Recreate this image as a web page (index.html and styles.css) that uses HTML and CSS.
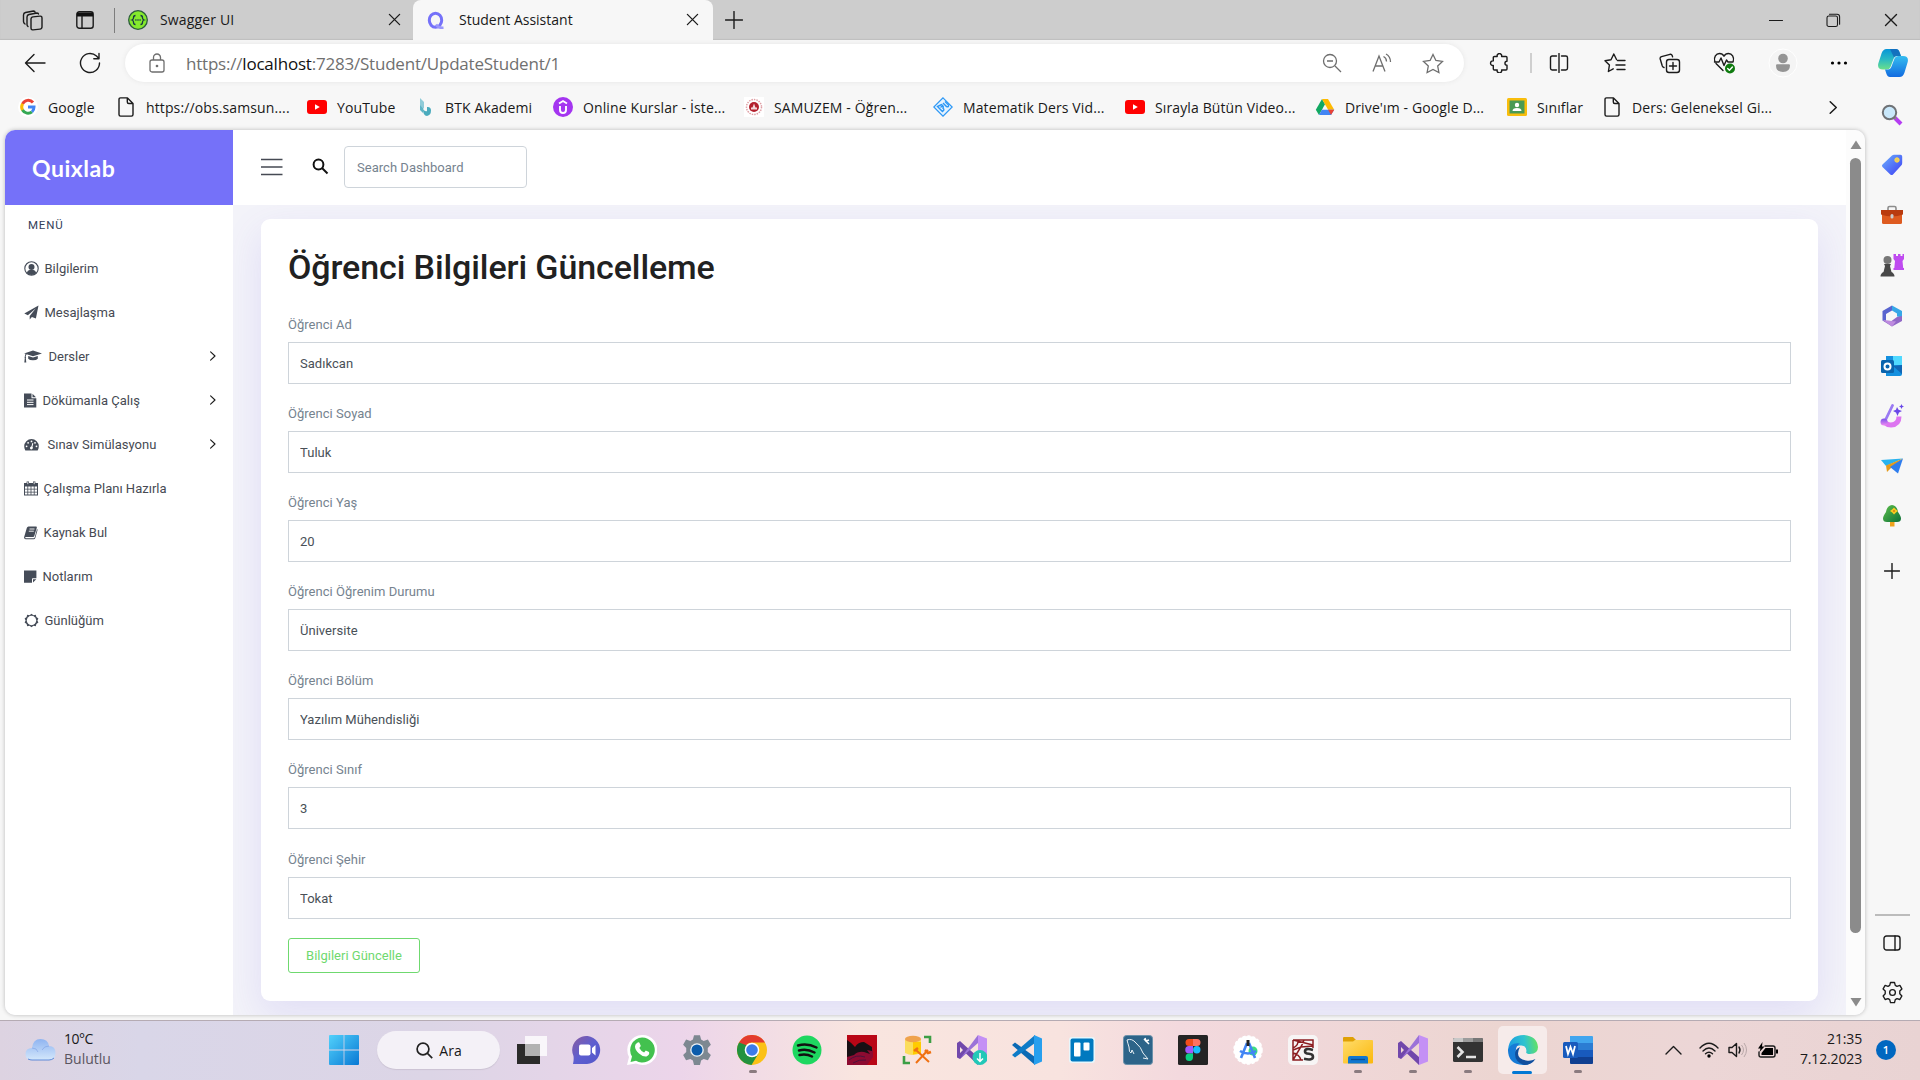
FILE: index.html
```html
<!DOCTYPE html>
<html lang="tr">
<head>
<meta charset="utf-8">
<title>Student Assistant</title>
<link rel="stylesheet" href="styles.css">
</head>
<body>
<svg class="defs" width="0" height="0" aria-hidden="true">
  <defs>
    <symbol id="close" viewBox="0 0 14 14"><path d="M1.5 1.5l11 11M12.5 1.5l-11 11" class="ln"/></symbol>
    <symbol id="file" viewBox="0 0 20 20"><path d="M4.5.9h7L17 6.4v11.2q0 1.5-1.5 1.5h-11Q3 19.100 3 17.600V2.400Q3 .900 4.500.900zM11.300 1v4q0 1.500 1.500 1.500H17" class="ln"/></symbol>
    <symbol id="youtube" viewBox="0 0 20 20"><rect x="0" y="3" width="20" height="14" rx="3" fill="#f00"/><path d="M8 7.300v5.400l4.800-2.700z" fill="#fff"/></symbol>
    <symbol id="chev" viewBox="0 0 10 14"><path d="M2 1.800L7.500 7 2 12.200" class="ln"/></symbol>
    <linearGradient id="gBlue" x1="0" y1="0" x2="1" y2="1"><stop offset="0" stop-color="#52d1fb"/><stop offset="1" stop-color="#0878d4"/></linearGradient>
    <linearGradient id="gCopA" x1="0" y1="0" x2="0" y2="1"><stop offset="0" stop-color="#0795d8"/><stop offset=".5" stop-color="#29b9c4"/><stop offset="1" stop-color="#6be08a"/></linearGradient>
    <linearGradient id="gCopB" x1="0" y1="0" x2="0" y2="1"><stop offset="0" stop-color="#35bdf0"/><stop offset="1" stop-color="#126be0"/></linearGradient>
    <linearGradient id="gViolet" x1="0" y1="0" x2="1" y2="1"><stop offset="0" stop-color="#8a5b9f"/><stop offset=".5" stop-color="#5d5fd0"/><stop offset="1" stop-color="#5357c9"/></linearGradient>
    <linearGradient id="gCloud" x1="0" y1="0" x2="0" y2="1"><stop offset="0" stop-color="#8fb4f1"/><stop offset="1" stop-color="#d3e7fb"/></linearGradient>
    <linearGradient id="gEdge" x1="0" y1=".4" x2="1" y2=".3"><stop offset="0" stop-color="#1b9de2"/><stop offset=".55" stop-color="#2fc3cf"/><stop offset="1" stop-color="#66e35d"/></linearGradient>
    <linearGradient id="gTag" x1="0" y1="0" x2="1" y2="1"><stop offset="0" stop-color="#6cb2fb"/><stop offset="1" stop-color="#3d3cf5"/></linearGradient>
    <linearGradient id="gMag" x1="0" y1="0" x2="0" y2="1"><stop offset="0" stop-color="#7a52ea"/><stop offset="1" stop-color="#f08bf3"/></linearGradient>
    <linearGradient id="gTree" x1="0" y1="0" x2="1" y2="1"><stop offset="0" stop-color="#5ec04a"/><stop offset="1" stop-color="#0d7038"/></linearGradient>
    <linearGradient id="gFolder" x1="0" y1="0" x2="1" y2="1"><stop offset="0" stop-color="#ffdc6b"/><stop offset="1" stop-color="#fbb80c"/></linearGradient>
    <symbol id="vs" viewBox="0 0 30 30"><path d="M0 8l3-2 6 5.500L21 22v8L9 18.500 3 24l-3-1.500zm3 4v6l3-3z" fill="#7148ab" fill-rule="evenodd"/><path d="M3 24L21 0v8L9 18.500z" fill="#9b72d8"/><path d="M21 0l9 3.500v23L21 30z" fill="#c490f5"/></symbol>
    <symbol id="gear" viewBox="0 0 24 24"><path d="M9.900 1.600h4.200l.8 3 1.800 1 3-1 2.100 3.700-2.200 2.200v2.900l2.200 2.200-2.100 3.700-3-.9-1.800 1-.8 3.100H9.900l-.8-3.100-1.800-1-3 .9-2.100-3.700 2.200-2.200v-2.900L2.200 8.300l2.100-3.700 3 1 1.800-1z"/><circle cx="12" cy="12" r="3"/></symbol>
  </defs>
</svg>
<div class="screen">
  <header class="tabs">
    <span class="slot workspaces"><svg width="22" height="22" viewBox="0 0 22 22" class="ln"><rect x="9" y="7" width="11" height="13" rx="2" transform="skewY(-6) translate(0 2)"/><path d="M6 17.500q-1-.8-1-2V8q0-2 2-2.500l8-1.500q1.500 0 1.500 1M3 15q-1.500-1-1.500-2.500V6q0-2 2-2.500l8-1.500q1.500 0 1.500 1"/></svg></span>
    <span class="slot vtabs"><svg width="18" height="18" viewBox="0 0 18 18"><rect x=".8" y=".8" width="16.400" height="16.400" rx="2.500" class="ln"/><path d="M1 1.500h16V5.500H1z" fill="#111"/><path d="M6 5v12" class="ln"/></svg></span>
    <i class="tabsep"></i>
    <div class="tab">
      <svg width="20" height="20" viewBox="0 0 20 20"><circle cx="10" cy="10" r="9.300" fill="#85ea2d" stroke="#2b5c3b" stroke-width="1.300"/><path d="M7.500 5.500q-2 0-2 2.200 0 1.800-1.500 2.300 1.500.5 1.500 2.300 0 2.200 2 2.200M12.500 5.500q2 0 2 2.200 0 1.800 1.500 2.300-1.500.5-1.500 2.300 0 2.200-2 2.200" fill="none" stroke="#173647" stroke-width="1.300"/><path d="M7.300 10h1.200M9.400 10h1.200M11.500 10h1.200" stroke="#173647" stroke-width="1.400"/></svg>
      <span class="tabname">Swagger UI</span><svg class="x" width="13" height="13"><use href="#close"/></svg>
    </div>
    <div class="tab active">
      <svg width="20" height="20" viewBox="0 0 20 20"><ellipse cx="9.500" cy="10.200" rx="6.200" ry="7" fill="none" stroke="#7571f9" stroke-width="3"/><path d="M10 14.500q2 3.500 7.500 3.200" fill="none" stroke="#9a97fb" stroke-width="2.600"/></svg>
      <span class="tabname">Student Assistant</span><svg class="x" width="13" height="13"><use href="#close"/></svg>
    </div>
    <span class="newtab"><svg width="18" height="18" viewBox="0 0 18 18"><path d="M9 .5v17M.5 9h17" class="ln"/></svg></span>
    <div class="winbtns">
      <svg width="14" height="14" viewBox="0 0 14 14"><path d="M0 7.500h13.500" class="ln thin"/></svg>
      <svg width="15" height="15" viewBox="0 0 15 15" class="ln thin"><rect x="1" y="3" width="10.500" height="10.500" rx="1.800"/><path d="M3.500 1.200h7.500q2.600 0 2.600 2.600v7.500"/></svg>
      <svg width="14" height="14"><use href="#close"/></svg>
    </div>
  </header>

  <nav class="toolbar">
    <span class="slot back"><svg width="22" height="20" viewBox="0 0 22 20"><path d="M10 1.500L1.500 10l8.500 8.500M1.500 10H21" class="ln"/></svg></span>
    <span class="slot"><svg width="22" height="22" viewBox="0 0 22 22"><path d="M20.500 11a9.500 9.500 0 1 1-3-6.900l2.300 2.400M20 1.500v5.200h-5.200" class="ln"/></svg></span>
    <div class="address">
      <svg class="lock" width="18" height="20" viewBox="0 0 18 20"><rect x="2" y="7" width="14" height="12" rx="2"/><path d="M5.500 7V4.500a3.500 3.500 0 0 1 7 0V7"/><circle cx="9" cy="13" r=".7"/></svg>
      <span class="url">https://<b>localhost</b>:7283/Student/UpdateStudent/1</span>
      <div class="addricons">
        <svg width="20" height="20" viewBox="0 0 20 20"><circle cx="8" cy="8" r="6.500"/><path d="M13 13l6 6M5 8h6"/></svg>
        <svg width="20" height="20" viewBox="0 0 20 20"><path d="M1 18.500L7 3l6 15.500M3 13h8M11.500 3.500q3 1.500 3 5M14 1q4.500 2.500 4.500 8"/></svg>
        <svg width="22" height="21" viewBox="0 0 22 21"><path d="M11 1.500l2.900 6 6.600.9-4.800 4.600 1.200 6.500L11 16.400l-5.900 3.100 1.200-6.500L1.500 8.400l6.600-.9z"/></svg>
      </div>
    </div>
    <div class="tools">
      <svg width="20" height="20" viewBox="0 0 20 20" class="ln"><path d="M5.500 3.500h2.700a2.300 2.300 0 1 1 4.400 0H17q1 0 1 1v3.700a1.900 1.900 0 1 0 0 4.100v3.700q0 1-1 1h-4.400a2.300 2.300 0 1 1-4.400 0H5.500q-1.200 0-1.200-1v-3.600a2.300 2.300 0 1 1 0-4.500V4.500q0-1 1.200-1z"/></svg>
      <i class="toolsep"></i>
      <svg width="20" height="20" viewBox="0 0 20 20" class="ln"><path d="M7.500 3H3.200Q1.500 3 1.500 4.700v10.600q0 1.700 1.700 1.700h4.300M12.500 3h4.300q1.700 0 1.700 1.700v10.600q0 1.700-1.700 1.700h-4.300M10 .5v19"/></svg>
      <svg width="22" height="20" viewBox="0 0 22 20" class="ln"><path d="M12.500 6.500L9.800 1 7 6.800 1 7.700l4.400 4.400-1 6.400 4.800-2.700M13.500 7.500H21M12 12h9M13 16.500h8"/></svg>
      <svg width="22" height="21" viewBox="0 0 22 21" class="ln"><rect x="7.500" y="6.500" width="13" height="13" rx="2.500"/><path d="M14 9.500v7M10.500 13h7M5 14.500q-1.200-.3-1.700-1.500L1.200 6Q.8 4.200 2.500 3.700L11 1.300q1.600-.3 2.200 1.300l.4 1.300"/></svg>
      <svg width="24" height="22" viewBox="0 0 24 22" class="ln"><path d="M10 18.500L3 11.500M1.800 9.500C.5 5 3 1.500 6.500 1.500q3 0 4.500 2.700 1.500-2.700 4.500-2.700c3.500 0 6 3.500 4.700 8M1.500 10h4.500l2-4 3 7.500L13.500 8l1.500 2h5"/><circle cx="17" cy="16.500" r="5" fill="#0f7b0f" stroke="none"/><path d="M14.700 16.600l1.700 1.700 3-3.300" stroke="#fff"/></svg>
      <svg width="30" height="30" viewBox="0 0 30 30"><circle cx="15" cy="15" r="14" fill="#f4f4f4" stroke="#fff"/><circle cx="15" cy="10.500" r="4.800" fill="#949494"/><path d="M8 17.500q0-1.200 1.200-1.200h11.600q1.200 0 1.200 1.200 0 6.500-7 6.500t-7-6.500z" fill="#949494"/></svg>
      <svg width="18" height="6" viewBox="0 0 18 6"><circle cx="2.500" cy="3" r="1.600"/><circle cx="9" cy="3" r="1.600"/><circle cx="15.500" cy="3" r="1.600"/></svg>
      <svg width="30" height="28" viewBox="0 0 30 28"><path d="M8.500 0H18q2.500 0 3.500 3L23 7h-4q-2.500 0-3.500 3l-3 8q-1 2.500-4 2.500H5q-6 0-4.700-6L3.500 4.500Q5 0 8.500 0z" fill="url(#gCopA)"/><path d="M21.500 28H12q-2.500 0-3.500-3L7 20.500h3q2.500 0 3.500-3l3-8Q17.500 7 20 7h5q6 0 4.700 6l-3.200 10.500Q25 28 21.500 28z" fill="url(#gCopB)"/><path d="M12 0h6q2.500 0 3.500 3L23 7h-4.500q-2 0-2.500 1.500z" fill="#1462b8" opacity=".75"/></svg>
    </div>
  </nav>

  <nav class="bookmarks">
    <a class="w97"><svg width="20" height="20" viewBox="0 0 20 20"><circle cx="10" cy="10" r="10" fill="#fff"/><g fill="none" stroke-width="3"><path d="M15 5.500A6.300 6.300 0 0 0 4.500 7" stroke="#ea4335"/><path d="M4.600 6.800a6.300 6.300 0 0 0 0 6.400" stroke="#fbbc05"/><path d="M4.500 13A6.300 6.300 0 0 0 14 14.800" stroke="#34a853"/><path d="M10 10h6q0 3.200-2 4.800" stroke="#4285f4"/></g></svg><span>Google</span></a>
    <a class="w191"><svg width="20" height="20"><use href="#file"/></svg><span>https://obs.samsun....</span></a>
    <a class="w108"><svg width="20" height="20"><use href="#youtube"/></svg><span>YouTube</span></a>
    <a class="w138"><svg width="20" height="20" viewBox="0 0 20 20"><path d="M5 1l4 4v7L5 8.500z" fill="#8fcbd8"/><path d="M5 8l3 3v5l-3-3z" fill="#5eb4c6"/><path d="M8 12q0 7 4 7 4-1 4-5.500 0-4-4-3.500v4q-2 1-4-2z" fill="#4aabbd"/></svg><span>BTK Akademi</span></a>
    <a class="w191"><svg width="20" height="20" viewBox="0 0 20 20"><circle cx="10" cy="10" r="10" fill="#a435f0"/><path d="M6 6.500L10 4l4 2.500M7 9v4q0 3 3 3t3-3V9" fill="none" stroke="#fff" stroke-width="1.900"/></svg><span>Online Kurslar - İste...</span></a>
    <a class="w189"><svg width="20" height="20" viewBox="0 0 20 20"><path fill="#fff" d="M0 0h20v20H0z"/><circle cx="10" cy="10" r="7.500" fill="none" stroke="#df9fa4" stroke-width="1.500" stroke-dasharray="1.500 1"/><circle cx="10" cy="10" r="5" fill="#b3202d"/><path d="M10 6.500l1.500 4h1.500v2H7v-2h1.500z" fill="#f3d8da"/></svg><span>SAMUZEM - Öğren...</span></a>
    <a class="w192"><svg width="20" height="20" viewBox="0 0 20 20"><path d="M10 .8l9.200 9.200-9.200 9.200L.8 10z" fill="#e6f3fe" stroke="#2c97f5" stroke-width="1.200"/><path d="M4.500 9.500l5 5q2.500-1.500.5-3.200 1-2.500-1.500-3.800zM7.500 10.500l2-1.800M10 6l3.500 3.600q2.500.8 2-1.600L12 4.500" fill="none" stroke="#2c97f5" stroke-width="1.400"/></svg><span>Matematik Ders Vid...</span></a>
    <a class="w190"><svg width="20" height="20"><use href="#youtube"/></svg><span>Sırayla Bütün Video...</span></a>
    <a class="w192"><svg width="20" height="20" viewBox="0 0 20 20"><path d="M7 2L10 7.300 4 18 .8 12.700z" fill="#11a861"/><path d="M7 2h6l6.200 10.700h-6.100z" fill="#ffba00"/><path d="M6.900 12.700h12.300L16 18H4z" fill="#4285f4"/><path d="M13.100 12.700h6.100L16 18z" fill="#ea4335"/></svg><span>Drive'ım - Google D...</span></a>
    <a class="w95"><svg width="20" height="20" viewBox="0 0 20 20"><rect y="1" width="20" height="18" rx="1.500" fill="#f9bd0c"/><path d="M2.500 3.500h15v13h-15z" fill="#4a9a54"/><circle cx="10" cy="8" r="2.200" fill="#fff"/><path d="M5.500 14q0-3 4.500-3t4.500 3z" fill="#fff"/></svg><span>Sınıflar</span></a>
    <a class="w226"><svg width="20" height="20"><use href="#file"/></svg><span>Ders: Geleneksel Gi...</span></a>
    <svg class="more" width="11" height="17"><use href="#chev"/></svg>
  </nav>

  <div class="middle">
    <div class="page">
      <aside class="side">
        <div class="brand">Quixlab</div>
        <div class="menulabel">MENÜ</div>
        <ul class="menu">
          <li><svg width="15" height="15" viewBox="0 0 15 15"><circle cx="7.500" cy="7.500" r="6.700" fill="none" stroke="#454c58" stroke-width="1.100"/><circle cx="7.500" cy="6" r="3"/><path d="M2.800 11.500q1-2.300 2.700-2.600h4q1.700.3 2.700 2.600-1.700 2.500-4.700 2.500t-4.700-2.500z"/></svg><span class="p6">Bilgilerim</span></li>
          <li><svg width="15" height="15" viewBox="0 0 15 15"><path d="M14.500.5L.3 8.600l3.600 1.600 8-7-6.200 7.900v3.400l2.200-2.600 4 1.700z"/></svg><span class="p6">Mesajlaşma</span></li>
          <li><svg width="18" height="15" viewBox="0 0 18 15"><path d="M9 1.500l9 2.900-9 2.900-6.300-2.100q-.9.700-1 2.600.8.500.1 1.200l.5 4.400H.3l.5-4.400q-.6-.7 0-1.200 0-1.700.8-3L0 4.400zM4.200 7L9 8.500 13.800 7v2.800Q12.500 11.300 9 11.300t-4.800-1.500z"/></svg><span class="p7">Dersler</span><svg class="arrow" width="8" height="12"><use href="#chev"/></svg></li>
          <li><svg width="13" height="15" viewBox="0 0 13 15"><path d="M0 .5h7.500v4.800h4.800v9.200H0zM8.500.8l3.500 3.500H8.500z"/><path d="M3 7h6.500M3 9.300h6.500M3 11.600h6.500" stroke="#fff"/></svg><span class="p6">Dökümanla Çalış</span><svg class="arrow" width="8" height="12"><use href="#chev"/></svg></li>
          <li><svg width="15" height="15" viewBox="0 0 15 15"><path d="M7.500 2A7.300 7.300 0 0 0 .2 9.300q0 2 1 3.900.1.300.6.300h11.400q.5 0 .6-.3 1-1.900 1-3.900A7.300 7.300 0 0 0 7.500 2z"/><g fill="#fff"><circle cx="2.600" cy="9.300" r=".9"/><circle cx="4.100" cy="5.800" r=".9"/><circle cx="7.500" cy="4.400" r=".9"/><circle cx="11" cy="5.800" r=".9"/><circle cx="12.500" cy="9.300" r=".9"/><path d="M8.300 6l1 .3-.8 3.400q1 1-.1 2.200-1.300 1-2.300-.1-.7-1.800 1.400-2.500z"/></g></svg><span class="p9">Sınav Simülasyonu</span><svg class="arrow" width="8" height="12"><use href="#chev"/></svg></li>
          <li><svg width="14" height="15" viewBox="0 0 14 15"><path d="M0 2h14v12.500H0z"/><path d="M1 5.500h2.400v2.200H1zm3.200 0h2.400v2.200H4.200zm3.200 0h2.400v2.200H7.400zm3.200 0H13v2.200h-2.400zM1 8.500h2.400v2.200H1zm3.200 0h2.400v2.200H4.200zm3.200 0h2.400v2.200H7.400zm3.200 0H13v2.200h-2.400zM1 11.500h2.400v2H1zm3.200 0h2.400v2H4.200zm3.200 0h2.400v2H7.400zm3.200 0H13v2h-2.400z" fill="#fff"/><path d="M3.800.5v3M10.200.5v3" stroke="#454c58" stroke-width="2.400"/><path d="M3.800 1v2.200M10.200 1v2.200" stroke="#fff" stroke-width=".8"/></svg><span class="p6">Çalışma Planı Hazırla</span></li>
          <li><svg width="14" height="15" viewBox="0 0 14 15"><path d="M4.500 1.500h7.800q.8.200.5 1.200L10.300 11q-.3.900-1.200.9H2q-1 .2-.8.900.2.500 1 .5h7.600q.6 0 .9-.8L13 4q.8.400.5 1.300L11.300 13q-.4 1.300-1.600 1.300H2q-1.600 0-2-1.900L2.800 3q.4-1.500 1.700-1.500z"/><path d="M5.500 4h5M4.800 6.200h5" stroke="#fff" stroke-width=".9"/></svg><span class="p6">Kaynak Bul</span></li>
          <li><svg width="13" height="15" viewBox="0 0 13 15"><path d="M0 1.500h12.400v7.800H8.700q-.7 0-.7.700v3.800H0zM9 10.300h3.300L9 13.600z"/></svg><span class="p6">Notlarım</span></li>
          <li><svg width="15" height="15" viewBox="0 0 15 15"><path d="M7.500.7l1.900 1.500 2.400-.4.600 2.300 2 1.300-1 2.100 1 2.100-2 1.300-.6 2.300-2.400-.4-1.900 1.500-1.900-1.500-2.400.4-.6-2.300-2-1.300 1-2.100-1-2.100 2-1.300.6-2.300 2.400.4z"/><circle cx="7.500" cy="7.500" r="4.700" fill="#fff"/></svg><span class="p6">Günlüğüm</span></li>
        </ul>
      </aside>
      <div class="main">
        <div class="apphead">
          <svg class="burger" width="22" height="18" viewBox="0 0 22 18"><path d="M0 1.500h21.500M0 9h21.500M0 16.500h21.500"/></svg>
          <svg class="find" width="17" height="17" viewBox="0 0 17 17"><circle cx="6.500" cy="6.500" r="4.900"/><path d="M10 10l5.500 5.500"/></svg>
          <input class="search" placeholder="Search Dashboard">
        </div>
        <div class="content">
          <form class="card">
            <h1>Öğrenci Bilgileri Güncelleme</h1>
            <label>Öğrenci Ad</label><input value="Sadıkcan">
            <label>Öğrenci Soyad</label><input value="Tuluk">
            <label>Öğrenci Yaş</label><input value="20">
            <label>Öğrenci Öğrenim Durumu</label><input value="Üniversite">
            <label>Öğrenci Bölüm</label><input value="Yazılım Mühendisliği">
            <label>Öğrenci Sınıf</label><input value="3">
            <label>Öğrenci Şehir</label><input value="Tokat">
            <button type="button">Bilgileri Güncelle</button>
          </form>
        </div>
      </div>
      <div class="scroll">
        <svg width="12" height="10" viewBox="0 0 12 10"><path d="M6 .5L11.500 9H.5z"/></svg>
        <i class="thumb"></i>
        <svg width="12" height="10" viewBox="0 0 12 10"><path d="M6 9.500L11.500 1H.5z"/></svg>
      </div>
    </div>
    <aside class="dock">
      <span><svg width="22" height="22" viewBox="0 0 22 22"><path d="M13.500 13.500l6.500 6.500" stroke="#b53df2" stroke-width="4"/><path d="M12.500 12.500l2.500 2.500" stroke="#888" stroke-width="2"/><circle cx="8.500" cy="8.500" r="6.700" fill="#c9e8fb" stroke="#6f7276" stroke-width="2"/></svg></span>
      <span><svg width="22" height="22" viewBox="0 0 22 22"><path d="M11 1.500q1-.7 2-.7h6.500q1.700 0 1.700 1.700v6.500q0 1.500-1 2.500L12 20.500q-1.300 1.200-2.700 0L1.500 13q-1.200-1.200 0-2.500z" fill="url(#gTag)"/><circle cx="16" cy="6" r="2.200" fill="#e7cc62" stroke="#ffd94a"/></svg></span>
      <span><svg width="24" height="20" viewBox="0 0 24 20"><path d="M8 5V3q0-1.500 1.500-1.500h5Q16 1.500 16 3v2" fill="none" stroke="#8c8c8c" stroke-width="1.600"/><rect x="2" y="6" width="20" height="13" rx="1.500" fill="#de5b20"/><path d="M1 5h22v4.500q-11 4-22 0z" fill="#b93b0f"/><rect x="10.500" y="9" width="3" height="4.500" rx="1.500" fill="#ccc"/></svg></span>
      <span><svg width="24" height="24" viewBox="0 0 24 24"><path d="M13.500 1h2.500v2h2V1h2.500v2h2V1H24v5l-1.500 2 .7 7H24v2H13.500v-2h.8l.7-7-1.500-2z" fill="#bf4bf0"/><circle cx="7.500" cy="7" r="4" fill="#777"/><path d="M4 11h7l-1 2 1.500 6q3 1.500 3 4.500H.5q0-3 3-4.500L5 13z" fill="#484848"/></svg></span>
      <span><svg width="22" height="22" viewBox="0 0 22 22"><path d="M11 .5L1.500 6v9.500L5 17V9l6-3.500z" fill="#5864cf"/><path d="M11 .5L21 6v6.500l-5-1V8.500L11 5.500z" fill="#36a7e7"/><path d="M21 11v5l-10 5.500-9.500-6 9 .5L16 12z" fill="#9168c7"/><path d="M2 15l9 6.500 4-5-5-.5z" fill="#be8bdf"/></svg></span>
      <span><svg width="22" height="22" viewBox="0 0 22 22"><path d="M5 1h15q1 0 1 1v17q0 2-2 2H5z" fill="#1490df"/><path d="M12 1h9v9h-9z" fill="#50d9ff"/><path d="M12 11l9 8v-9z" fill="#1066b5"/><rect x="0" y="5" width="13" height="13" rx="1.500" fill="#0a64ad"/><circle cx="6.500" cy="11.500" r="3" fill="none" stroke="#fff" stroke-width="2"/></svg></span>
      <span><svg width="24" height="24" viewBox="0 0 24 24"><path d="M4 15q.5 6 7 6 8-.5 8-8.500" fill="none" stroke="#dd75f0" stroke-width="5"/><path d="M5 17L12.500 1.500" stroke="#9a7af3" stroke-width="2.800" stroke-linecap="round"/><circle cx="4" cy="18" r="3.500" fill="url(#gMag)"/><path d="M17 3l1.500 2.700L22 7l-3 1.500L17.500 12 16 8.500 13 7l3-1.200zM21.500 0l.8 1.700L24 2.500l-1.700.8-.8 1.700-.8-1.700-1.700-.8 1.700-.8z" fill="#6a48e8"/></svg></span>
      <span><svg width="22" height="18" viewBox="0 0 22 18"><path d="M0 3L22 1.500 5 9z" fill="#29b3ef"/><path d="M22 1.500L5 8.500l1 6.500 4-4z" fill="#e59b1c"/><path d="M22 1.500L9 10l8 6.500z" fill="#2e7dee"/></svg></span>
      <span><svg width="20" height="24" viewBox="0 0 20 24"><path d="M8 16h4.500v6.500H8z" fill="#efa21d"/><path d="M10 1q5 .5 6 7 3 4 3 6.500 0 3.500-4 3.500H5q-4 0-4-3.500Q1 12 4 8q1-6.500 6-7z" fill="url(#gTree)"/><path d="M12 3.500l1.700 1.800L16 7l-2 1.500-2 1.900-1.800-1.900L8 7l2.300-1.700z" fill="#f9cb21"/><circle cx="12" cy="7" r="1" fill="#d77c10"/></svg></span>
      <span class="plus"><svg width="16" height="16" viewBox="0 0 16 16"><path d="M8 .5v15M.5 8h15" class="ln"/></svg></span>
      <i class="rule"></i>
      <span class="panel"><svg width="18" height="16" viewBox="0 0 18 16" class="ln"><rect x="1" y="1" width="16" height="14" rx="2.500"/><path d="M12 1v14"/></svg></span>
      <span class="cog"><svg width="23" height="23" class="ln"><use href="#gear"/></svg></span>
    </aside>
  </div>

  <footer class="taskbar">
    <div class="weather">
      <svg width="31" height="24" viewBox="0 0 31 24"><path d="M7 23q-6.500 0-6.500-6T7 11q1-9 8.500-9t8.500 7q6.500 0 6.500 7T24 23z" fill="url(#gCloud)"/><path d="M7 11q5 0 6 4M24 9q-5 0-7 4" fill="none" stroke="#7d9fe5" opacity=".6"/><path d="M3 22q2 1 4 1h17q3 0 5-2" fill="none" stroke="#5e8ad8"/></svg>
      <div><div class="deg">10°C</div><div class="cond">Bulutlu</div></div>
    </div>
    <div class="apps">
      <span class="start"><svg width="30" height="30" viewBox="0 0 30 30"><path d="M1 0h13.600v14.500H0V1q0-1 1-1zM15.400 0H29q1 0 1 1v13.500H15.400zM0 15.500h14.600V30H1q-1 0-1-1zM15.400 15.500H30V29q0 1-1 1H15.400z" fill="url(#gBlue)"/></svg></span>
      <div class="ara"><svg width="17" height="17" viewBox="0 0 17 17"><circle cx="7" cy="7" r="5.900"/><path d="M11.200 11.200l5 5"/></svg><span>Ara</span></div>
      <div class="icons">
        <span><svg width="30" height="30" viewBox="0 0 30 30"><path d="M0 9h23v20H0z" fill="#2b2b2a"/><path d="M8 1h22v20H8z" fill="#fff" opacity=".78"/><path d="M8 9h15v12H8z" fill="#9f9f9f" opacity=".6"/></svg></span>
        <span><svg width="30" height="30" viewBox="0 0 30 30"><path d="M1 29q1-4 .5-8A14 14 0 1 1 15 29z" fill="url(#gViolet)"/><rect x="7" y="9.500" width="11.500" height="11" rx="2" fill="#fff"/><path d="M20 13l3.500-3v10.500L20 17.500z" fill="#fff"/></svg></span>
        <span><svg width="30" height="30" viewBox="0 0 30 30"><path d="M15 0a15 15 0 1 1-6 28.500L0 30l2-8A15 15 0 0 1 15 0z" fill="#fff"/><path d="M15 2.500a12.500 12.500 0 1 1-6 23.300L3.500 27 5 21.500A12.500 12.500 0 0 1 15 2.500z" fill="#43c14f"/><path d="M10 8q2-1.500 2.800.5l1 2.500-1.500 2q1.700 3.200 4.800 4.500l1.700-2 3.200 1.600q1 3-2.500 4.300-3.500.6-7.500-3t-4-7q0-2.200 2-3.400z" fill="#fff"/></svg></span>
        <span><svg width="34" height="34" viewBox="0 0 24 24" fill="#7d8891"><use href="#gear"/><circle cx="12" cy="12" r="4.800" fill="#eef3f7"/><circle cx="12" cy="12" r="3.900" fill="#0b5cab"/></svg></span>
        <span class="on"><svg width="30" height="30" viewBox="0 0 30 30"><circle cx="15" cy="15" r="15" fill="#fbc116"/><path d="M2 7.500A15 15 0 0 0 14.500 30l7-11.500L15 15z" fill="#23923f"/><path d="M2 7.500A15 15 0 0 1 28 7.500H15q-5 0-6.500 4z" fill="#e33b2e"/><path d="M2 7.500l6.500 11.200 3-7.700z" fill="#23923f"/><circle cx="15" cy="15" r="7.300" fill="#fff"/><circle cx="15" cy="15" r="5.800" fill="#3c7be8"/></svg></span>
        <span><svg width="30" height="30" viewBox="0 0 30 30"><circle cx="15" cy="15" r="14.500" fill="#1ed760"/><path d="M6 10.500q9.500-2.500 18.500 2M7 15.500q8-2 15.500 2M7.500 20q7-1.500 12.500 1.500" fill="none" stroke="#111" stroke-width="2.500" stroke-linecap="round"/></svg></span>
        <span><svg width="30" height="30" viewBox="0 0 30 30"><path d="M0 0h30v30H0z" fill="#b90616"/><path d="M0 20l12-8 14 3v7l-6 8H0z" fill="#8d0b31"/><path d="M0 5q5 3 8 7 3-5 9-5l8 5v4l-5-1 3 4-6-2q-6-1-10 3l-7 2z" fill="#171014"/><path d="M2 25q7-6 16-3M6 28q6-4 13-3" fill="none" stroke="#4c123b"/></svg></span>
        <span><svg width="30" height="30" viewBox="0 0 30 30"><path d="M3 4v14q7 4 16 0V4z" fill="#fbdd5c"/><path d="M11 7h8v11l-8 1.500z" fill="#ffcb00"/><ellipse cx="11" cy="4" rx="8" ry="3.200" fill="#efa24c"/><path d="M22 2h6v6M2 21v7h6" fill="none" stroke="#3c9e44" stroke-width="2.600"/><path d="M14 15l13 12M26 15L14 28" stroke="#f07112" stroke-width="2"/><path d="M12 16l4-3M23 15l3 3 3-1" stroke="#f07112" stroke-width="2.600" fill="none"/></svg></span>
        <span><svg width="30" height="30" viewBox="0 0 30 30"><use href="#vs"/><circle cx="23" cy="22.500" r="7.500" fill="#22c8b7"/><path d="M23 18v8M20 23.500l3 3 3-3" fill="none" stroke="#fff" stroke-width="1.500"/></svg></span>
        <span><svg width="30" height="30" viewBox="0 0 30 30"><path d="M0 10l3-2.500L23 22v8L0 10z" fill="#0b6ab5"/><path d="M0 20L23 0v8L3 22.500z" fill="#0e7bc7"/><path d="M22 0l8 3.500v23L22 30z" fill="#279fee"/></svg></span>
        <span><svg width="26" height="26" viewBox="0 0 26 26"><rect width="26" height="26" rx="3" fill="#e7f7fc"/><rect x="1.500" y="1.500" width="23" height="23" rx="2" fill="#0079bf"/><rect x="5" y="5.500" width="6.500" height="14" rx="1" fill="#fff"/><rect x="14.500" y="5.500" width="6" height="8" rx="1" fill="#fff"/></svg></span>
        <span><svg width="30" height="30" viewBox="0 0 30 30"><rect x=".5" y=".5" width="29" height="29" rx="3" fill="#2d6489" stroke="#6a91aa"/><path d="M4 5q5-2 9 3 5 4 7 10l5 6-5-1M4 5q1 4 2 7 0 6 2 6l1-3 2 4" fill="none" stroke="#e8f0f5" stroke-width="1"/><path d="M21 4l5 5M22 3l1 3 3-1" stroke="#fff" stroke-width="1.500" fill="none"/></svg></span>
        <span><svg width="30" height="30" viewBox="0 0 30 30"><rect width="30" height="30" rx="1.500" fill="#242424"/><path d="M15 4h-4a3.500 3.500 0 0 0 0 7h4z" fill="#f24e1e"/><path d="M15 4h4a3.500 3.500 0 0 1 0 7h-4z" fill="#ff7262"/><path d="M15 11h-4a3.600 3.600 0 0 0 0 7.500h4z" fill="#a259ff"/><circle cx="18.800" cy="14.800" r="3.700" fill="#1abcfe"/><path d="M15 18.500h-4a3.700 3.700 0 1 0 4 3.700z" fill="#0acf83"/></svg></span>
        <span><svg width="30" height="30" viewBox="0 0 30 30"><circle cx="15" cy="15" r="14" fill="#fff" stroke="#fff" stroke-width="1.500" stroke-dasharray="3 2"/><circle cx="20" cy="16" r="4.500" fill="#3ddc84"/><path d="M14 8L8 23M16 8l6 15M7 16q8 5 16 0" fill="none" stroke="#4285f4" stroke-width="2.600"/><path d="M15 5v6" stroke="#222" stroke-width="3"/></svg></span>
        <span><svg width="30" height="30" viewBox="0 0 30 30"><rect width="30" height="30" rx="5" fill="#f7f5f5"/><path d="M5 5h20v8M5 5v20h10M5 5l20 5M5 25l9-15 2-5M5 15l8-3 12-1M5 18q6 1 8 7M10 5q1 5-5 8" fill="none" stroke="#8c1d20" stroke-width="1.500"/><path d="M25 15q-8-2.500-8 1.500 0 2 4 2.300 4 .4 4 3 0 4-9 2" fill="none" stroke="#333" stroke-width="2.600"/></svg></span>
        <span class="on"><svg width="30" height="28" viewBox="0 0 30 28"><path d="M0 2q0-1 1-1h9l3 3v4H0z" fill="#dfa005"/><path d="M0 5.500h10l2-1.500h17q1 0 1 1v21.500q0 1-1 1H1q-1 0-1-1z" fill="url(#gFolder)"/><path d="M5 27.500V22q0-2 2-2h16q2 0 2 2v5.500z" fill="#1177cf"/><path d="M8 23.500h14" stroke="#0b4f92" stroke-width="1.300"/></svg></span>
        <span class="on"><svg width="30" height="30"><use href="#vs"/></svg></span>
        <span class="on"><svg width="30" height="24" viewBox="0 0 30 24"><rect width="30" height="24" rx="1.500" fill="#333"/><path d="M0 1.500Q0 0 1.500 0H10v4H0z" fill="#c8c8c8"/><path d="M10 0h10v4H10z" fill="#9c9c9c"/><path d="M20 0h8.500Q30 0 30 1.500V4H20z" fill="#777"/><path d="M4.500 9l5 5-5 5M13 19h10" fill="none" stroke="#e3e3e3" stroke-width="2.600"/></svg></span>
        <span class="on current"><svg width="30" height="30" viewBox="0 0 30 30"><path d="M0 15Q1 0 16 0q13 1 14 12 0 7-8 7-5 0-3.500-3 0-5-5-5.500Q3 10 0 17z" fill="url(#gEdge)"/><path d="M0 15q3-8 12-6.500-5 3-4 9 2 9 13 9l5-1q-5 5-11 4.500Q0 29 0 15z" fill="#167bd6"/><path d="M12 12q-6 11 6 13.500 5 1 9.500-1.500-4 6-11.500 6-9-3-9-11 0-5 5-7z" fill="#104f9e"/></svg></span>
        <span class="on"><svg width="30" height="28" viewBox="0 0 30 28"><path d="M7 0h22q1 0 1 1v6H7z" fill="#41a5ee"/><path d="M7 7h23v7H7z" fill="#2b7cd3"/><path d="M7 14h23v7H7z" fill="#185abd"/><path d="M7 21h23v6q0 1-1 1H8q-1 0-1-1z" fill="#103f91"/><rect y="6" width="15" height="16" rx="1.500" fill="#185abd"/><path d="M3 10l2 8 2.500-7 2.500 7 2-8" fill="none" stroke="#fff" stroke-width="1.800"/></svg></span>
      </div>
    </div>
    <div class="tray">
      <svg width="17" height="10" viewBox="0 0 17 10"><path d="M1 9l7.500-7.500L16 9" class="ln"/></svg>
      <svg class="wifi" width="20" height="16" viewBox="0 0 20 16"><path d="M1 6Q10-3.500 19 6M4 9q6-6 12 0M6.500 11.800Q10 8.500 13.500 11.800" class="ln"/><circle cx="10" cy="14" r="1.700"/></svg>
      <svg class="vol" width="20" height="16" viewBox="0 0 20 16"><path d="M1 5.500h3l4.500-4v13l-4.500-4H1zM11 5q2 3 0 6" class="ln"/><path d="M13.500 3q4 5 0 10M16 1q5 7 0 14" fill="none" stroke="#b8a7a8"/></svg>
      <svg class="bat" width="20" height="17" viewBox="0 0 20 17"><path d="M7 4h8q2 0 2 2v7q0 2-2 2H3q-2 0-2-2v-3" class="ln"/><path d="M7.500 6H15v7H3.500v-2zM18 7.500h2v4h-2zM4.500 0L0 6.500h2.500L1.500 10 6.500 4.500H4z"/></svg>
      <div class="clock"><div>21:35</div><div>7.12.2023</div></div>
      <span class="badge">1</span>
    </div>
  </footer>
</div>
</body>
</html>
```
FILE: styles.css
```css
* { box-sizing: border-box; }
body { margin: 0; font-family: "Open Sans", "Noto Sans", sans-serif; font-size: 14px; color: #191919; }
svg { display: block; flex: none; }
.defs { position: absolute; }
.ln { fill: none; stroke: #1b1b1b; stroke-width: 1.4; stroke-linecap: round; stroke-linejoin: round; }
.thin { stroke-width: 1.1; }
.screen { width: 1920px; height: 1080px; display: flex; flex-direction: column; background: #f7f7f7; overflow: hidden; }
.slot { display: flex; align-items: center; justify-content: center; }

.tabs { height: 40px; background: #cdcdcd; display: flex; align-items: center; box-shadow: inset 0 -1px 1px #bdbdbd; }
.workspaces { width: 42px; margin-left: 12px; }
.vtabs { width: 62px; margin-right: -2px; }
.tabsep { width: 1px; height: 25px; background: #7d7d7d; }
.tab { display: flex; align-items: center; height: 40px; width: 298px; padding: 0 12px 1px 13px; }
.tab.active { width: 300px; background: #f7f7f7; border-radius: 8px 8px 0 0; padding-right: 14px; }
.tabname { margin-left: 12px; letter-spacing: .15px; }
.active .tabname { margin-left: 13px; letter-spacing: 0; }
.tab .x { margin-left: auto; }
.newtab { margin-left: 12px; }
.winbtns { margin-left: auto; display: flex; gap: 43px; padding-right: 22px; }

.toolbar { height: 46px; display: flex; align-items: center; }
.toolbar .slot { width: 55px; }
.toolbar .back { margin-left: 7px; }
.address { margin-left: 8px; width: 1339px; height: 38px; border-radius: 19px; background: #fff; display: flex; align-items: center; box-shadow: 0 0 5px #e6e6e6; padding: 0 20px 0 23px; }
.address svg { fill: none; stroke: #6e6e6e; stroke-width: 1.3; }
.url { margin-left: 20px; font-size: 17px; color: #707070; letter-spacing: -.21px; }
.url b { font-weight: 400; color: #111; }
.addricons { margin-left: auto; display: flex; align-items: center; gap: 30px; }
.tools { display: grid; grid-template-columns: 50px 14px 42px 69px 42px 68px 47px 66px 41px; margin-left: 10px; align-items: center; justify-items: center; }
.toolsep { width: 2px; height: 20px; background: #cfcfcf; }

.bookmarks { height: 44px; display: flex; align-items: center; padding: 0 0 2px 18px; }
.bookmarks a { display: flex; align-items: center; gap: 10px; white-space: nowrap; }
.bookmarks span { letter-spacing: .12px; }
.w95 { width: 95px; }
.w97 { width: 98px; }
.w108 { width: 108px; }
.w138 { width: 138px; }
.w189 { width: 189px; }
.w190 { width: 190px; }
.w191 { width: 191px; }
.w192 { width: 192px; }
.w226 { width: 226px; }
.more { margin-left: auto; margin-right: 81px; }

.middle { height: 890px; display: flex; padding-left: 5px; }
.page { width: 1860px; height: 885px; display: flex; border-radius: 10px; overflow: hidden; background: #f3f3f9; box-shadow: 0 0 4px #b9b9b9; font-family: Roboto, sans-serif; }
.side { width: 228px; background: #fff; }
.brand { height: 75px; background: #7571f9; color: #fff; font: 700 23px/77px Lato, sans-serif; padding-left: 27px; letter-spacing: .5px; }
.menulabel { padding-left: 23px; height: 40px; line-height: 40px; font-size: 11.500px; letter-spacing: .8px; color: #33415a; }
.menu { list-style: none; margin: 0; padding: 1px 16px 0 18.500px; }
.menu li { display: flex; align-items: center; height: 44.1px; font-size: 13px; color: #464a53; }
.menu svg { fill: #454c58; }
.menu .arrow { margin-left: auto; }
.p6 { margin-left: 6px; }
.p7 { margin-left: 7px; }
.p9 { margin-left: 9px; }
.main { width: 1613px; }
.apphead { height: 75px; background: #fff; display: flex; align-items: center; padding: 0 0 2px 28px; }
.burger { fill: none; stroke: #464a53; stroke-width: 1.500; }
.find { fill: none; stroke: #111; stroke-width: 2; margin-left: 29px; }
input { font: 13px Roboto, sans-serif; letter-spacing: .03px; color: #495057; height: 42px; border: 1px solid #ced4da; padding: 1px 11px 0; background: #fff; display: block; width: 100%; }
input.search { width: 183px; margin-left: 15px; border-radius: 4px; padding-left: 12px; }
.search::placeholder { color: #76838f; opacity: 1; }
.content { padding: 14px 28px; height: 810px; overflow: hidden; }
.card { height: 782px; border-radius: 9px; background: #fff; box-shadow: 0 14px 38px rgba(112, 95, 225, .14); padding: 28px 27px 0; }
h1 { margin: 0 0 26px; font-size: 34px; line-height: 40px; font-weight: 500; letter-spacing: -.1px; color: #212121; }
.card label { display: block; height: 29px; line-height: 24px; font-size: 13px; letter-spacing: .03px; color: #76838f; }
.card input { margin-bottom: 18.100px; }
.card button { display: block; width: 132px; height: 35px; margin-top: 19px; border: 1px solid #6fd96f; border-radius: 3px; background: #fff; color: #6fd96f; font: 13px Roboto, sans-serif; padding: 0; }
.scroll { width: 19px; background: #fcfcfc; display: flex; flex-direction: column; align-items: center; padding: 10px 0 8px; }
.scroll svg { fill: #8b8b8b; }
.thumb { width: 11px; height: 775px; border-radius: 6px; background: #8b8b8b; margin: 8px 0 auto; }

.dock { width: 54px; display: flex; flex-direction: column; align-items: center; margin-top: -41px; }
.dock span { height: 50.200px; display: flex; align-items: center; justify-content: center; }
.dock span:first-child { height: 51px; }
.dock .plus { height: 58px; }
.dock .rule { width: 35px; height: 2px; background: #bcbcbc; margin-top: auto; }
.dock .panel { height: 54px; }
.dock .cog { height: 45px; margin-bottom: 5px; }

.taskbar { height: 60px; border-top: 1px solid #b5abb3; display: flex; align-items: center; padding-bottom: 1px; background: linear-gradient(90deg, #ddd3e1 0, #d9d6e8 140px, #dcd5e6 430px, #ecd5ea 680px, #f9e5df 860px, #f8e3df 1060px, #f3d9de 1180px, #ecd5d1 1500px, #ecd6d6 1700px, #e9d3d3 1920px); }
.weather { display: flex; align-items: center; width: 305px; padding: 0 0 2px 25px; gap: 8px; font-size: 14px; line-height: 20px; }
.weather > svg { margin-bottom: 1px; }
.deg { letter-spacing: -.5px; }
.cond { color: #5a5560; letter-spacing: 0; }
.apps { display: flex; align-items: center; }
.start { margin-left: 24px; }
.ara { margin-left: 18px; width: 123px; height: 38px; border-radius: 19px; background: #f4f1f7; box-shadow: 0 1px 1px #cbc3d3; display: flex; align-items: center; justify-content: center; gap: 6px; padding-left: 1px; }
.ara svg { fill: none; stroke: #222; stroke-width: 1.700; }
.icons { display: flex; margin-left: 4.500px; }
.icons span { width: 55.050px; height: 60px; display: flex; align-items: center; justify-content: center; position: relative; }
.icons .on::after { content: ""; position: absolute; left: 24px; bottom: 7px; width: 8px; height: 3px; border-radius: 2px; background: #8a7b7f; }
.icons .current { width: 49px; height: 48px; border-radius: 5px; background: #f6ebea; margin: 6px 3.025px; }
.icons .current::after { width: 20px; left: 14px; bottom: 0; background: #0078d4; }
.tray { margin-left: auto; display: flex; align-items: center; padding-right: 24px; }
.wifi { margin-left: 17px; }
.vol { margin-left: 9px; }
.bat { margin-left: 10px; }
.clock { width: 84px; text-align: right; line-height: 20px; font-size: 14px; letter-spacing: -.15px; padding-bottom: 2px; }
.badge { width: 20px; height: 20px; margin-left: 14px; border-radius: 50%; background: #0067c0; color: #fff; font-size: 11px; font-weight: 600; line-height: 20px; text-align: center; }
```
